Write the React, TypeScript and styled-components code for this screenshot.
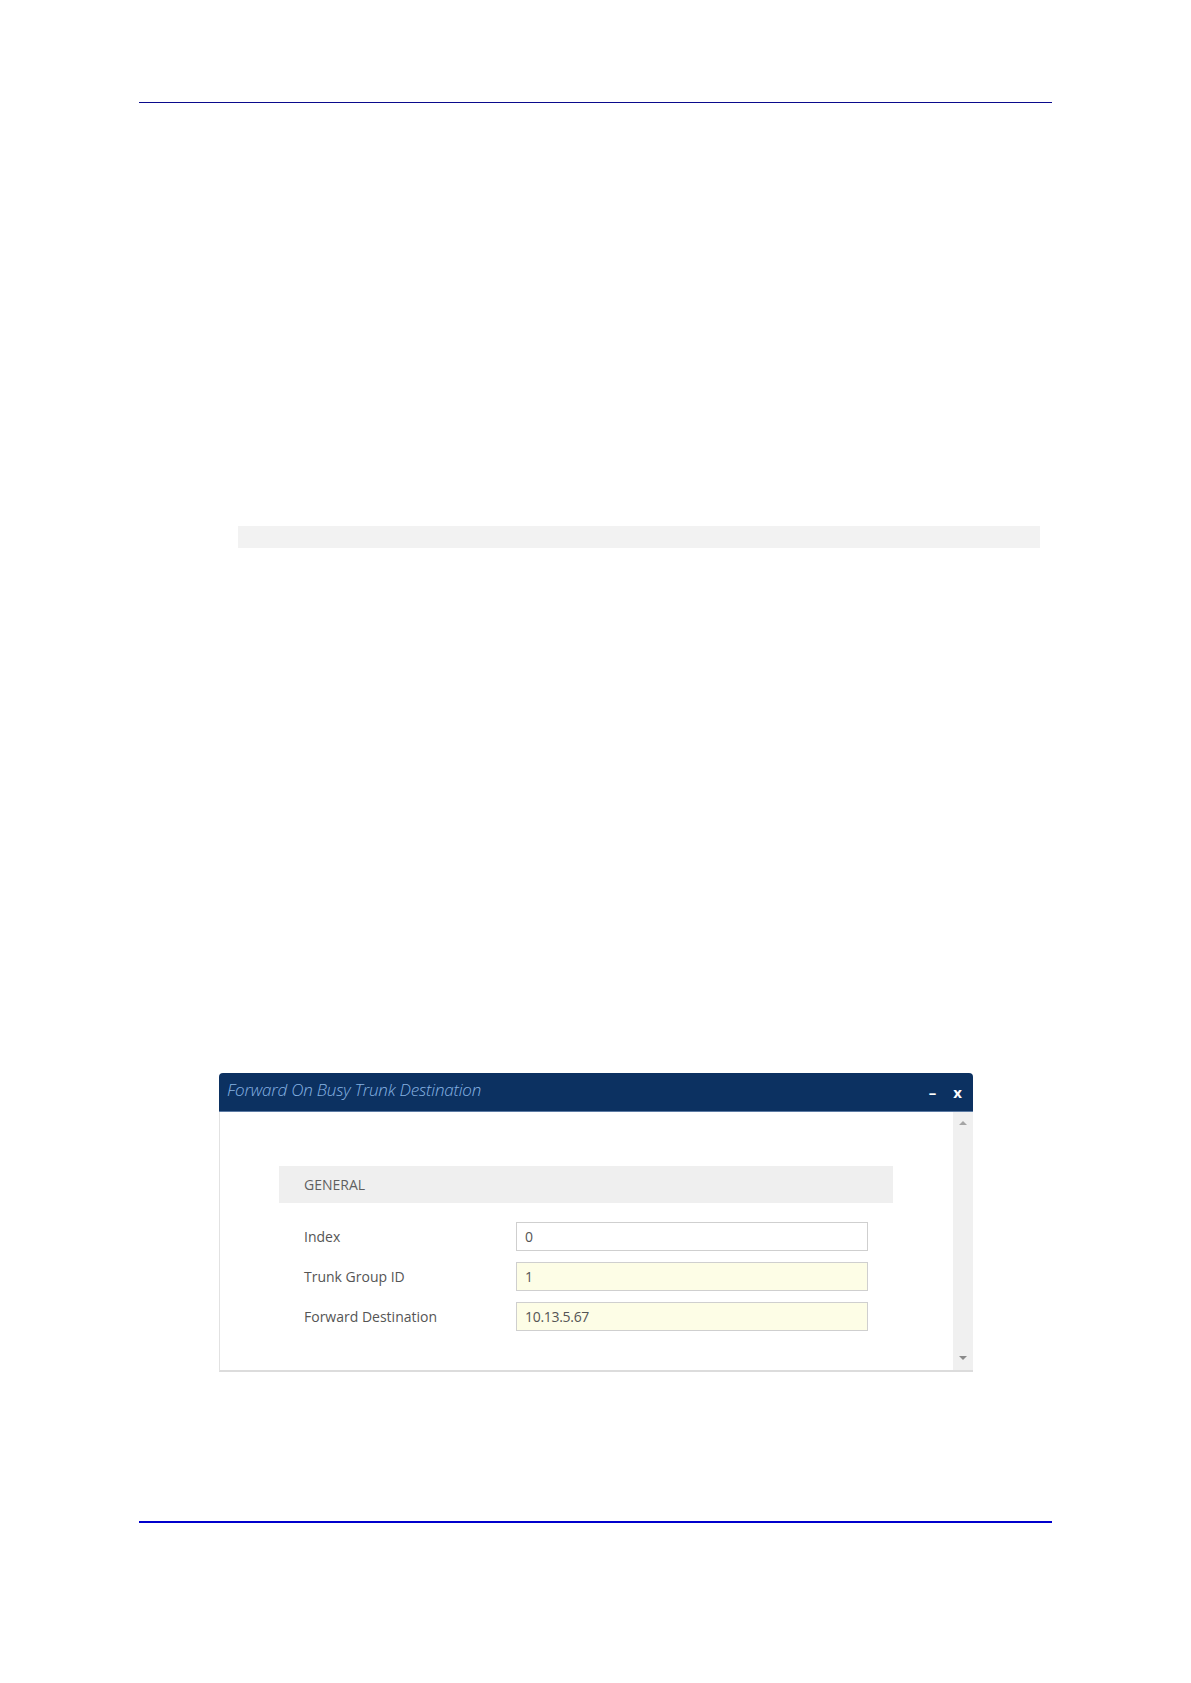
import { styled, createGlobalStyle } from "styled-components";

const GlobalStyle = createGlobalStyle`
  html, body {
    margin: 0;
    padding: 0;
    background: #fff;
    font-family: "Open Sans", "Liberation Sans", sans-serif;
  }
`;

type Field = { label: string; value: string; required?: boolean };

const fields: Field[] = [
  { label: "Index", value: "0" },
  { label: "Trunk Group ID", value: "1", required: true },
  { label: "Forward Destination", value: "10.13.5.67", required: true },
];

export default function App() {
  return (
    <Page>
      <GlobalStyle />
      <HeaderRule />
      <CodeBar />
      <Dialog>
        <TitleBar>
          <Title>Forward On Busy Trunk Destination</Title>
          <TitleButtons>
            <TitleButton>–</TitleButton>
            <TitleButton>x</TitleButton>
          </TitleButtons>
        </TitleBar>
        <Body>
          <Content>
            <Section>
              <SectionHeader>GENERAL</SectionHeader>
              <Rows>
                {fields.map((f) => (
                  <Row key={f.label}>
                    <Label>{f.label}</Label>
                    <Input $required={f.required}>{f.value}</Input>
                  </Row>
                ))}
              </Rows>
            </Section>
          </Content>
          <Scrollbar>
            <Arrow $dir="up" />
            <Arrow $dir="down" />
          </Scrollbar>
        </Body>
      </Dialog>
      <FooterRule />
    </Page>
  );
}

const Page = styled.div`
  width: 1191px;
  height: 1683px;
  display: flex;
  flex-direction: column;
  box-sizing: border-box;
  padding-top: 102px;
`;

const HeaderRule = styled.div`
  margin-left: 139px;
  width: 913px;
  border-top: 1px solid #0a0a8c;
`;

const CodeBar = styled.div`
  margin-top: 423px;
  margin-left: 238px;
  width: 802px;
  height: 22px;
  background: #f2f2f2;
`;

const Dialog = styled.div`
  margin-top: 525px;
  margin-left: 219px;
  width: 754px;
  display: flex;
  flex-direction: column;
`;

const TitleBar = styled.div`
  height: 39px;
  background: #0c3161;
  border-radius: 4px 4px 0 0;
  display: flex;
  align-items: center;
  justify-content: space-between;
  padding: 0 11px 0 8px;
  border-bottom: 1px solid #5b7aa3;
  box-sizing: border-box;
`;

const Title = styled.span`
  font-family: "Open Sans", "Liberation Sans", sans-serif;
  font-style: italic;
  font-weight: 300;
  font-size: 17px;
  letter-spacing: -0.2px;
  color: #86b2e2;
  margin-top: -6px;
`;

const TitleButtons = styled.div`
  display: flex;
  gap: 17px;
  align-items: center;
`;

const TitleButton = styled.span`
  color: #fff;
  font-weight: 700;
  font-size: 15px;
  line-height: 1;
`;

const Body = styled.div`
  height: 260px;
  display: flex;
  border-left: 1px solid #e2e2e2;
  border-bottom: 2px solid #dcdcdc;
  box-sizing: border-box;
`;

const Content = styled.div`
  flex: 1;
  padding: 54px 0 0 59px;
`;

const Section = styled.div`
  width: 614px;
  display: flex;
  flex-direction: column;
`;

const SectionHeader = styled.div`
  height: 37px;
  background: #efefef;
  display: flex;
  align-items: center;
  padding-left: 25px;
  font-size: 14px;
  color: #5f5f5f;
`;

const Rows = styled.div`
  display: flex;
  flex-direction: column;
  gap: 11px;
  margin-top: 19px;
`;

const Row = styled.div`
  display: grid;
  grid-template-columns: 237px 352px;
  align-items: center;
`;

const Label = styled.span`
  padding-left: 25px;
  font-size: 14px;
  color: #555;
`;

const Input = styled.div<{ $required?: boolean }>`
  height: 29px;
  box-sizing: border-box;
  border: 1px solid #cfcfcf;
  background: ${({ $required }) => ($required ? "#fdfde6" : "#fff")};
  display: flex;
  align-items: center;
  padding-left: 8px;
  font-size: 14px;
  color: #555;
  letter-spacing: -0.3px;
`;

const Scrollbar = styled.div`
  width: 20px;
  background: #f0f0f0;
  display: flex;
  flex-direction: column;
  justify-content: space-between;
  align-items: center;
  padding: 9px 0 10px;
  box-sizing: border-box;
`;

const Arrow = styled.div<{ $dir: "up" | "down" }>`
  width: 0;
  height: 0;
  border-left: 4px solid transparent;
  border-right: 4px solid transparent;
  ${({ $dir }) =>
    $dir === "up"
      ? "border-bottom: 4px solid #a5a5a5;"
      : "border-top: 4px solid #8a8a8a;"}
`;

const FooterRule = styled.div`
  margin-top: 149px;
  margin-left: 139px;
  width: 913px;
  border-top: 2px solid #0000cc;
`;
